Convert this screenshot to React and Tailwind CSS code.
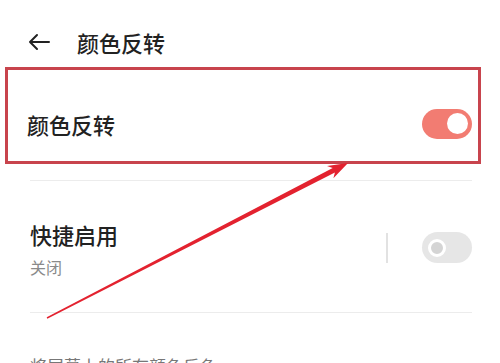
export default function App() {
  return (
    <div
      className="relative w-[500px] h-[363px] overflow-hidden bg-white text-[#222]"
      style={{ fontFamily: '"Noto Sans CJK SC", "Noto Sans", sans-serif' }}
    >
      {/* Header */}
      <div className="h-[67px] pt-[17px] flex items-center pl-[27px]">
        <svg width="24" height="20" viewBox="0 0 24 20" className="mr-[26px]">
          <path d="M22 10H3M10 3L3 10l7 7" fill="none" stroke="#222" strokeWidth="2" strokeLinecap="round" strokeLinejoin="round" />
        </svg>
        <span className="text-[22px] leading-none font-medium">颜色反转</span>
      </div>

      {/* Row 1 (highlighted) */}
      <div className="ml-[5px] w-[476px] h-[97px] border-[3px] border-[#c8444d] flex items-center justify-between pl-[19px] pr-[6px] pt-[16px]">
        <span className="text-[22px] leading-none font-medium">颜色反转</span>
        <div className="w-[50px] h-[30px] rounded-full bg-[#f27c72] flex items-center justify-end pr-[4px]">
          <div className="w-[21px] h-[21px] rounded-full bg-white" />
        </div>
      </div>

      <div className="mt-[16px] ml-[30px] w-[442px] h-px bg-[#ececec]" />

      {/* Row 2 */}
      <div className="h-[131px] ml-[30px] w-[442px] flex items-center">
        <div className="flex-1 flex flex-col pt-[4px]">
          <span className="text-[22px] leading-none font-medium">快捷启用</span>
          <span className="mt-[14px] text-[16px] leading-none text-[#8a8a8a]">关闭</span>
        </div>
        <div className="w-[2px] h-[30px] bg-[#e2e2e2] mr-[34px] mt-[2px]" />
        <div className="w-[50px] h-[31px] rounded-full bg-[#e6e6e6] flex items-center pl-[6px] mt-[2px]">
          <div className="w-[18px] h-[18px] rounded-full border-[3px] border-white bg-[#d4d4d4]" />
        </div>
      </div>

      <div className="ml-[30px] w-[442px] h-px bg-[#ececec]" />

      <div className="mt-[44px] ml-[30px] text-[17px] leading-none text-[#777]">
        将屏幕上的所有颜色反色
      </div>

      {/* Annotation arrow */}
      <svg className="absolute inset-0 pointer-events-none" width="500" height="363" viewBox="0 0 500 363">
        <polygon
          points="46.7,317.3 332.7,168.1 327,165.9 348,163 333.4,178.3 334.9,172.5 47.3,318.7"
          fill="#e3222f"
        />
      </svg>
    </div>
  );
}
